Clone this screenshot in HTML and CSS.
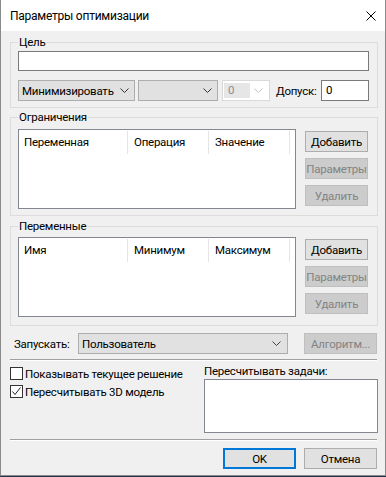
FILE: index.html
```html
<!DOCTYPE html>
<html>
<head>
  <title>Параметры оптимизации</title>
  <meta charset="UTF-8">
  <link rel="stylesheet" href="styles.css">
</head>
<body>
  <div class="window">
    <div class="titlebar">
      <span class="title">Параметры оптимизации</span>
      <svg class="close" width="10" height="10" viewBox="0 0 10 10">
        <path d="M0.5 0.5 L9.5 9.5 M9.5 0.5 L0.5 9.5" stroke="#000" stroke-width="1" fill="none"/>
      </svg>
    </div>

    <div class="client">
      <!-- Goal -->
      <fieldset class="group group-goal">
        <legend>Цель</legend>
        <div class="textbox goal-field"></div>
        <div class="goal-row">
          <div class="combo combo-mode">
            <span class="value">Минимизировать</span>
            <svg class="chev" width="9" height="5" viewBox="0 0 9 5"><polyline points="0.5,0.5 4.5,4.5 8.5,0.5" fill="none" stroke="#333"/></svg>
          </div>
          <div class="combo combo-var">
            <span class="value"></span>
            <svg class="chev" width="9" height="5" viewBox="0 0 9 5"><polyline points="0.5,0.5 4.5,4.5 8.5,0.5" fill="none" stroke="#333"/></svg>
          </div>
          <div class="combo combo-off">
            <span class="value"><span class="sel">0</span></span>
            <svg class="chev" width="9" height="5" viewBox="0 0 9 5"><polyline points="0.5,0.5 4.5,4.5 8.5,0.5" fill="none" stroke="#c4c4c4"/></svg>
          </div>
          <span class="tol-label">Допуск:</span>
          <div class="textbox tol-field">0</div>
        </div>
      </fieldset>

      <!-- Constraints -->
      <fieldset class="group group-list group-constraints">
        <legend>Ограничения</legend>
        <div class="list">
          <div class="list-head">
            <span class="col col-1">Переменная</span>
            <span class="col col-2">Операция</span>
            <span class="col col-3">Значение</span>
          </div>
        </div>
        <div class="side-buttons">
          <button class="btn">Добавить</button>
          <button class="btn disabled">Параметры</button>
          <button class="btn disabled">Удалить</button>
        </div>
      </fieldset>

      <!-- Variables -->
      <fieldset class="group group-list group-variables">
        <legend>Переменные</legend>
        <div class="list">
          <div class="list-head">
            <span class="col col-1">Имя</span>
            <span class="col col-2">Минимум</span>
            <span class="col col-3">Максимум</span>
          </div>
        </div>
        <div class="side-buttons">
          <button class="btn">Добавить</button>
          <button class="btn disabled">Параметры</button>
          <button class="btn disabled">Удалить</button>
        </div>
      </fieldset>

      <div class="run-row">
        <span class="run-label">Запускать:</span>
        <div class="combo combo-run">
          <span class="value">Пользователь</span>
          <svg class="chev" width="9" height="5" viewBox="0 0 9 5"><polyline points="0.5,0.5 4.5,4.5 8.5,0.5" fill="none" stroke="#444"/></svg>
        </div>
        <button class="btn disabled btn-wide">Алгоритм...</button>
      </div>

      <div class="separator"></div>

      <div class="options">
        <div class="checks">
          <label class="check">
            <span class="box"></span>
            <span>Показывать текущее решение</span>
          </label>
          <label class="check">
            <span class="box">
              <svg width="11" height="11" viewBox="0 0 11 11"><polyline points="1.5,5.5 4,8.5 9.5,1.5" fill="none" stroke="#222"/></svg>
            </span>
            <span>Пересчитывать 3D модель</span>
          </label>
        </div>
        <div class="recalc">
          <div class="recalc-label">Пересчитывать задачи:</div>
          <div class="recalc-box"></div>
        </div>
      </div>

      <div class="separator separator-bottom"></div>

      <div class="dialog-buttons">
        <button class="btn btn-wide btn-default">OK</button>
        <button class="btn btn-wide">Отмена</button>
      </div>
    </div>
  </div>
</body>
</html>
```

FILE: styles.css
```css
* {
  box-sizing: border-box;
}
html, body {
  margin: 0;
}
body {
  background: #24364f;
  font-family: Roboto, "Liberation Sans", Arial, sans-serif;
  font-size: 11.5px;
  letter-spacing: -0.25px;
  color: #000;
}
.window {
  width: 386px;
  height: 476px;
  background: #f0f0f0;
  border: 1px solid #8a8a8a;
  border-top: 0;
}
.titlebar {
  height: 31px;
  background: #fff;
  display: flex;
  align-items: center;
  justify-content: space-between;
  padding: 0 9px;
}
.title {
  font-size: 12px;
}
.client {
  padding: 5px 7px 0 9px;
}

/* group boxes */
.group {
  margin: 0;
  min-width: 0;
  border: 1px solid #dcdcdc;
  padding: 2px 8px 6px 7px;
}
.group legend {
  padding: 0 1px;
  line-height: 13px;
}
.group-list {
  display: flex;
  padding-right: 9px;
}
.group-constraints {
  margin-top: 3px;
  padding-top: 5px;
  padding-bottom: 6px;
}
.group-variables {
  margin-top: 4px;
  padding-top: 4px;
  padding-bottom: 8px;
}

/* inputs */
.textbox {
  border: 1px solid #7a7a7a;
  background: #fff;
  padding-left: 4px;
}
.goal-field {
  height: 20px;
}
.goal-row {
  display: flex;
  align-items: center;
  height: 21px;
  margin-top: 9px;
}
.combo {
  height: 21px;
  display: flex;
  align-items: center;
  border: 1px solid #adadad;
  background: #e1e1e1;
  padding: 0 5px 0 3px;
}
.combo .value {
  flex: 1;
  white-space: nowrap;
}
.combo-mode {
  width: 117px;
}
.combo-var {
  width: 80px;
  margin-left: 3px;
}
.combo-off {
  width: 48px;
  margin-left: 4px;
  background: #fff;
  border-color: #d9d9d9;
  padding: 0 6px 0 1px;
}
.combo-off .sel {
  display: block;
  width: 26px;
  height: 15px;
  line-height: 15px;
  background: #e6e6e6;
  color: #8c8c8c;
  padding-left: 4px;
}
.tol-label {
  margin-left: 6px;
}
.tol-field {
  width: 48px;
  height: 21px;
  line-height: 19px;
  margin-left: auto;
}

/* list views */
.list {
  width: 278px;
  height: 80px;
  border: 1px solid #828790;
  background: #fff;
}
.list-head {
  display: flex;
  margin-top: 1px;
}
.col {
  height: 23px;
  line-height: 23px;
  border-right: 1px solid #e5e5e5;
  padding-left: 6px;
}
.col-1 {
  width: 109px;
  padding-left: 5px;
}
.col-2,
.col-3 {
  width: 81px;
}
.side-buttons {
  display: flex;
  flex-direction: column;
  gap: 6px;
  margin-left: 9px;
  padding-top: 2px;
}

/* buttons */
.btn {
  width: 63px;
  height: 21px;
  margin: 0;
  padding: 0;
  border: 1px solid #adadad;
  background: #e1e1e1;
  font: inherit;
  letter-spacing: inherit;
  color: #000;
}
.btn.disabled {
  background: #cccccc;
  border-color: #bfbfbf;
  color: #838383;
}
.btn-wide {
  width: 73px;
}
.btn-default {
  border: 2px solid #0078d7;
}

/* run row */
.run-row {
  display: flex;
  align-items: center;
  height: 21px;
  margin-top: 7px;
}
.run-label {
  margin-left: 4px;
}
.combo-run {
  width: 210px;
  margin-left: auto;
  padding-right: 6px;
}
.run-row .btn {
  margin-left: 16px;
  margin-right: 1px;
}

.separator {
  width: 367px;
  height: 2px;
  margin-top: 5px;
  border-top: 1px solid #a0a0a0;
  border-bottom: 1px solid #fff;
}
.separator-bottom {
  margin-top: 6px;
}

/* options */
.options {
  display: flex;
  margin-top: 2px;
}
.checks {
  width: 194px;
  display: flex;
  flex-direction: column;
  gap: 5px;
  padding-top: 4px;
}
.check {
  display: flex;
  align-items: center;
  height: 13px;
}
.box {
  width: 13px;
  height: 13px;
  border: 1px solid #333;
  background: #fff;
  margin-right: 2px;
  display: flex;
}
.recalc {
  width: 174px;
}
.recalc-label {
  height: 16px;
  line-height: 16px;
}
.recalc-box {
  height: 54px;
  border: 1px solid #828790;
  background: #fff;
}

.dialog-buttons {
  display: flex;
  justify-content: flex-end;
  gap: 8px;
  margin-top: 7px;
  padding-right: 1px;
}
```
